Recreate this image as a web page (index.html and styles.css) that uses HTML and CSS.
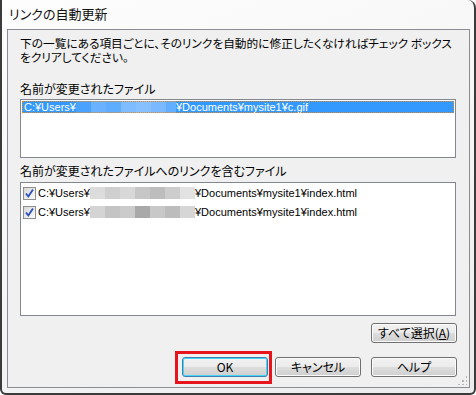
FILE: index.html
```html
<!DOCTYPE html>
<html>
  <head>
    <meta charset="utf-8">
    <link rel="stylesheet" href="styles.css">
  </head>
  <body>
    <div class="window">
      <div class="titlebar">リンクの自動更新</div>
      <div class="panel">
        <p class="intro">下の一覧にある項目ごとに、そのリンクを自動的に修正したくなければチェック ボックス<br>をクリアしてください。</p>

        <div class="label label-first">名前が変更されたファイル</div>
        <div class="listbox list-renamed">
          <div class="row selected">
            <span class="path">C:¥Users¥</span><span class="blur blur-blue"><i></i><i></i><i></i><i></i><i></i><i></i><i></i></span><span class="path">¥Documents¥mysite1¥c.gif</span>
          </div>
        </div>

        <div class="label">名前が変更されたファイルへのリンクを含むファイル</div>
        <div class="listbox list-links">
          <div class="row">
            <span class="check"><svg width="11" height="11" viewBox="0 0 11 11"><polyline points="2,5.5 4.3,8.5 9,1.5" fill="none" stroke="#2b4fc4" stroke-width="1.8"/></svg></span><span class="path">C:¥Users¥</span><span class="blur blur-gray"><i></i><i></i><i></i><i></i><i></i><i></i><i></i></span><span class="path">¥Documents¥mysite1¥index.html</span>
          </div>
          <div class="row">
            <span class="check"><svg width="11" height="11" viewBox="0 0 11 11"><polyline points="2,5.5 4.3,8.5 9,1.5" fill="none" stroke="#2b4fc4" stroke-width="1.8"/></svg></span><span class="path">C:¥Users¥</span><span class="blur blur-gray2"><i></i><i></i><i></i><i></i><i></i><i></i><i></i></span><span class="path">¥Documents¥mysite1¥index.html</span>
          </div>
        </div>

        <div class="select-row">
          <button class="btn">すべて選択(<u>A</u>)</button>
        </div>

        <div class="button-row">
          <button class="btn btn-default">OK<span class="mark"></span></button>
          <button class="btn">キャンセル</button>
          <button class="btn btn-help">ヘルプ</button>
        </div>
        <div class="grip"></div>
      </div>
    </div>
  </body>
</html>
```

FILE: styles.css
```css
* { box-sizing: border-box; }
body {
  margin: 0;
  background: #fff;
  font-family: "Noto Sans CJK JP", "Liberation Sans", sans-serif;
  font-feature-settings: "palt";
  font-size: 12px;
  color: #000;
}
.window {
  width: 476px;
  height: 395px;
  border: 2px solid #3b3b3b;
  border-top: none;
  border-radius: 0 8px 6px 6px;
  background: linear-gradient(160deg, #fdfdfd 0%, #f4f4f4 60%, #ececec 100%);
  padding: 0 4px 5px 5px;
  display: flex;
  flex-direction: column;
}
.titlebar {
  height: 29px;
  padding: 5px 0 0 2px;
  font-size: 13px;
  line-height: 17px;
  color: #111;
}
.panel {
  position: relative;
  flex: 1;
  background: #f0f0f0;
  border: 1px solid #8a8d93;
  padding: 0 0 0 12px;
  display: flex;
  flex-direction: column;
}
.intro {
  margin: 6px 0 0 0;
  height: 28px;
  line-height: 14px;
  font-size: 11.7px;
  white-space: nowrap;
}
.label {
  margin-top: 5px;
  height: 16px;
  line-height: 16px;
  font-size: 12px;
}
.label-first { margin-top: 17px; }
.listbox {
  width: 436px;
  background: #fff;
  border: 1px solid #828790;
  margin-top: 2px;
  padding: 1px;
}
.list-renamed { height: 59px; }
.list-links { height: 134px; padding-top: 4px; margin-top: 3px; }
.row {
  height: 12px;
  display: flex;
  align-items: center;
  white-space: nowrap;
  font-family: "Liberation Sans", sans-serif;
  font-size: 11px;
  line-height: 12px;
  padding-left: 2px;
}
.list-links .row { height: 12px; margin-bottom: 7px; padding-left: 1px; }
.selected {
  background: #3399ff;
  color: #fff;
  outline: 1px dotted #e08a2a;
  outline-offset: -1px;
}
.blur { display: flex; height: 12px; }
.blur i { width: 15px; height: 12px; }
.blur-blue i:nth-child(1) { background: #4aa2ff; }
.blur-blue i:nth-child(2) { background: #6ab2ff; }
.blur-blue i:nth-child(3) { background: #5fadff; }
.blur-blue i:nth-child(4) { background: #7fbcff; }
.blur-blue i:nth-child(5) { background: #86c0ff; }
.blur-blue i:nth-child(6) { background: #7ab9ff; }
.blur-blue i:nth-child(7) { background: #63afff; width: 10px; }
.blur-gray i:nth-child(1) { background: #dcdcdc; }
.blur-gray i:nth-child(2) { background: #cfcfcf; }
.blur-gray i:nth-child(3) { background: #d8d8d8; }
.blur-gray i:nth-child(4) { background: #c6c6c6; }
.blur-gray i:nth-child(5) { background: #bdbdbd; }
.blur-gray i:nth-child(6) { background: #cdcdcd; }
.blur-gray i:nth-child(7) { background: #e2e2e2; }
.blur-gray2 i:nth-child(1) { background: #d4d4d4; }
.blur-gray2 i:nth-child(2) { background: #c4c4c4; }
.blur-gray2 i:nth-child(3) { background: #cbcbcb; }
.blur-gray2 i:nth-child(4) { background: #a9a9a9; }
.blur-gray2 i:nth-child(5) { background: #c8c8c8; }
.blur-gray2 i:nth-child(6) { background: #bcbcbc; }
.blur-gray2 i:nth-child(7) { background: #d6d6d6; }
.check {
  width: 13px;
  height: 13px;
  border: 1px solid #8f8f8f;
  background: linear-gradient(135deg, #d8d8d8, #fbfbfb);
  margin-right: 2px;
  flex: none;
  display: flex;
}
.select-row {
  display: flex;
  justify-content: flex-end;
  width: 437px;
  margin-top: 7px;
}
.btn {
  width: 86px;
  height: 20px;
  padding: 0;
  border: 1px solid #707070;
  border-radius: 3px;
  background: linear-gradient(#f2f2f2 0%, #ebebeb 48%, #dddddd 52%, #cfcfcf 100%);
  box-shadow: inset 0 0 0 1px #fcfcfc;
  font-family: inherit;
  font-feature-settings: "palt";
  font-size: 12px;
  line-height: 16px;
  color: #000;
}
.btn u { text-decoration: underline; }
.button-row {
  display: flex;
  margin-top: 14px;
  padding-left: 162px;
  gap: 7px;
}
.btn-help { margin-left: 3px; }
.btn-default {
  position: relative;
  border-color: #3c7fb1;
  box-shadow: inset 0 0 0 1px #48d5f5;
}
.mark {
  position: absolute;
  left: -8px;
  top: -7px;
  width: 97px;
  height: 33px;
  border: 3px solid #e8141c;
}
.grip {
  position: absolute;
  right: 2px;
  bottom: 2px;
  width: 10px;
  height: 10px;
  background:
    radial-gradient(circle, #b5b5b5 1px, transparent 1.2px) 0 0 / 4px 4px;
  clip-path: polygon(100% 0, 100% 100%, 0 100%);
}
```
